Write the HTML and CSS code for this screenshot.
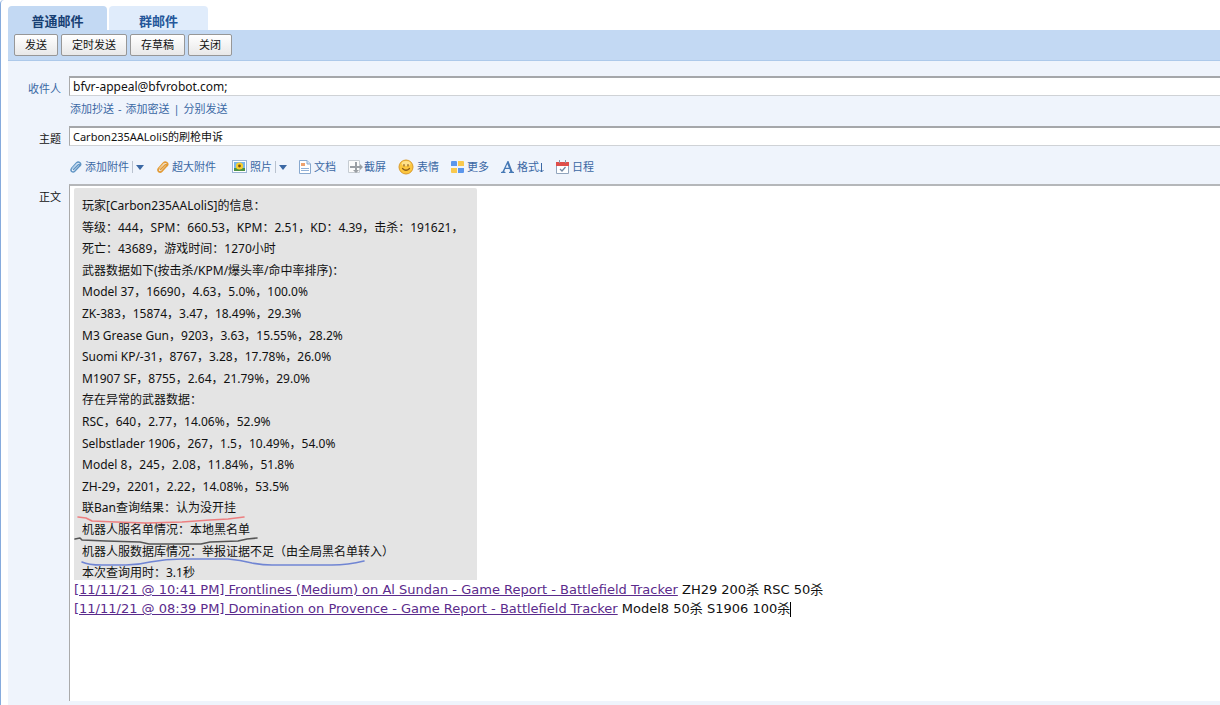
FILE: index.html
```html
<!DOCTYPE html>
<html lang="zh-CN">
<head>
<meta charset="utf-8">
<title>写邮件</title>
<link rel="stylesheet" href="styles.css">
</head>
<body>
<main class="compose">
  <nav class="tabs">
    <a class="tab tab-active" href="#mail">普通邮件</a>
    <a class="tab" href="#group">群邮件</a>
  </nav>
  <div class="actions">
    <button class="btn" type="button">发送</button>
    <button class="btn" type="button">定时发送</button>
    <button class="btn" type="button">存草稿</button>
    <button class="btn" type="button">关闭</button>
  </div>
  <form class="form">
    <label class="label label-link" for="to">收件人</label>
    <input class="field field-to" id="to" type="text" value="bfvr-appeal@bfvrobot.com;">
    <div class="row cc">
      <a href="#cc">添加抄送</a><span>-</span><a href="#bcc">添加密送</a><span>|</span><a href="#separate">分别发送</a>
    </div>
    <label class="label" for="subject">主题</label>
    <input class="field" id="subject" type="text" value="Carbon235AALoliS的刷枪申诉">
    <div class="row tools">
      <a class="tool" href="#attach">
        <svg width="13" height="14" viewBox="0 0 13 14" fill="none" stroke="#5f94c4" stroke-linecap="round"><path d="M4.500 9.500 9 5c1-1 2.300.2 1.400 1.300L5.700 11.300c-1.900 1.900-5-.5-3.200-2.700L7.400 3c2.200-2.300 5.500.3 3.700 2.700" stroke-width="1.500"/><path d="M3.500 8 8 3.200" stroke="#a9cbe8"/></svg>
        <span>添加附件</span><i class="bar"></i><i class="caret"></i>
      </a>
      <a class="tool tool-wide" href="#large">
        <svg width="13" height="14" viewBox="0 0 13 14" fill="none" stroke="#e29a35" stroke-linecap="round"><path d="M4.500 9.500 9 5c1-1 2.300.2 1.400 1.300L5.700 11.300c-1.900 1.900-5-.5-3.200-2.700L7.400 3c2.200-2.300 5.500.3 3.700 2.700" stroke-width="1.700"/><path d="M3.500 8 8 3.200" stroke="#f7cf8b"/></svg>
        <span>超大附件</span>
      </a>
      <a class="tool" href="#photo">
        <svg width="15" height="14" viewBox="0 0 15 14"><rect x=".5" y=".5" width="14" height="12" fill="#fff" stroke="#9ab4d4"/><path d="M2 2h11v9H2z" fill="#79b6ea"/><path d="M2 8h11v3H2z" fill="#4d9247"/><circle cx="7.500" cy="6" r="3.600" fill="#f8cf2c"/><circle cx="7.500" cy="6" r="1.400" fill="#76501d"/></svg>
        <span>照片</span><i class="bar"></i><i class="caret"></i>
      </a>
      <a class="tool" href="#doc">
        <svg width="12" height="14" viewBox="0 0 12 14"><path d="M.5.500h7.500l3.500 3.500v9.500H.5z" fill="#fff" stroke="#89a9cf"/><path d="M8 .5V4h3.500" fill="#d8e6f6" stroke="#89a9cf"/><path d="M2 3h4v3H2z" fill="#efa26e"/><path d="M2 8.500h8M2 10.500h8" stroke="#91b1d8"/></svg>
        <span>文档</span>
      </a>
      <a class="tool tool-shot" href="#shot">
        <svg width="15" height="14" viewBox="0 0 15 14"><path d="M.5.500h11v12H.5z" fill="#fbfbfb" stroke="#c6ccd2"/><path d="M7 2h2v4h5v2H9v4H7V8H2V6h5z" fill="#9a9fa4"/><path d="m12 4 3 3-3 3zM5 10h6l-3 3z" fill="#9a9fa4"/></svg>
        <span>截屏</span>
      </a>
      <a class="tool" href="#face">
        <svg width="16" height="16" viewBox="0 0 16 16"><circle cx="8" cy="8" r="7" fill="#fcc63e" stroke="#d99a2b"/><ellipse cx="8" cy="4.500" rx="4.500" ry="2.500" fill="#ffe18a"/><path d="M6 5.500v1.500M10 5.500v1.500M4.500 9.500q3.500 3.500 7 0" fill="none" stroke="#8a5a18" stroke-width="1.200" stroke-linecap="round"/></svg>
        <span>表情</span>
      </a>
      <a class="tool" href="#more">
        <svg width="13" height="12" viewBox="0 0 13 12"><path d="M1 0h4q1 0 1 1v4H0V1q0-1 1-1zM7 7h6v4q0 1-1 1H7z" fill="#5b96ec"/><path d="M7 0h5q1 0 1 1v4H7zM0 7h6v5H1q-1 0-1-1z" fill="#f9c94e"/></svg>
        <span>更多</span>
      </a>
      <a class="tool" href="#format">
        <svg width="13" height="12" viewBox="0 0 13 12"><path d="M6.500 0h1l4 10.500 1.500.5v1H8v-1l1.300-.5-.8-2.500H4.200l-1 2.500 1.300.5v1H0v-1l1.500-.5zM6.300 3 4.700 6.800h3.200z" fill="#4679b5" fill-rule="evenodd"/></svg>
        <span>格式<svg class="down" width="5" height="10" viewBox="0 0 5 10" role="img" aria-label="展开"><path d="M2.500 0v9M.5 7l2 2 2-2" fill="none" stroke="#3b68a4"/></svg></span>
      </a>
      <a class="tool" href="#calendar">
        <svg width="13" height="14" viewBox="0 0 13 14"><path d="M.5 2.500h12v11H.5z" fill="#fff" stroke="#92a5bd"/><path d="M0 2h13v4H0z" fill="#df4e4a"/><path d="M3.500 0v3M9.500 0v3" stroke="#8996a6"/><path d="m4 9 2 2 3.500-4" fill="none" stroke="#7187a3" stroke-width="1.300"/></svg>
        <span>日程</span>
      </a>
    </div>
    <span class="label" id="body-label">正文</span>
    <div class="editor" role="textbox" aria-labelledby="body-label" contenteditable="true" spellcheck="false">
      <div class="report">
        <p>玩家[Carbon235AALoliS]的信息：</p>
        <p>等级：444，SPM：660.53，KPM：2.51，KD：4.39，击杀：191621，</p>
        <p>死亡：43689，游戏时间：1270小时</p>
        <p>武器数据如下(按击杀/KPM/爆头率/命中率排序)：</p>
        <p>Model 37，16690，4.63，5.0%，100.0%</p>
        <p>ZK-383，15874，3.47，18.49%，29.3%</p>
        <p>M3 Grease Gun，9203，3.63，15.55%，28.2%</p>
        <p>Suomi KP/-31，8767，3.28，17.78%，26.0%</p>
        <p>M1907 SF，8755，2.64，21.79%，29.0%</p>
        <p>存在异常的武器数据：</p>
        <p>RSC，640，2.77，14.06%，52.9%</p>
        <p>Selbstlader 1906，267，1.5，10.49%，54.0%</p>
        <p>Model 8，245，2.08，11.84%，51.8%</p>
        <p>ZH-29，2201，2.22，14.08%，53.5%</p>
        <p>联Ban查询结果：认为没开挂</p>
        <p>机器人服名单情况：本地黑名单</p>
        <p>机器人服数据库情况：举报证据不足（由全局黑名单转入）</p>
        <p class="report-end">本次查询用时：3.1秒</p>
        <svg class="marks" width="300" height="56" viewBox="0 0 300 56" fill="none" stroke-width="1.600" stroke-linecap="round" stroke-linejoin="round">
          <path d="M4 5l8 1 6 3 24 1 30 1 36-1 28-2 18-1 16-2" stroke="#ed7f80"/>
          <path d="M1 27l5-1 2 2 24 1 34 1 9 2h52l9-2 28-1 9-2 10-1" stroke="#555"/>
          <path d="M8 50q6 3 20 3h24q12 0 24-3 16-3 32-3h46q12 1 24 4 10 2 20 2h60q16 0 32-4" stroke="#7085d3"/>
        </svg>
      </div>
      <p class="line"><a href="#r1">[11/11/21 @ 10:41 PM] Frontlines (Medium) on Al Sundan - Game Report - Battlefield Tracker</a> ZH29 200杀 RSC 50杀</p>
      <p class="line"><a href="#r2">[11/11/21 @ 08:39 PM] Domination on Provence - Game Report - Battlefield Tracker</a> Model8 50杀 S1906 100杀<i class="cursor"></i></p>
    </div>
  </form>
</main>
</body>
</html>
```
FILE: styles.css
```css
* { box-sizing: border-box; }
body {
  margin: 0;
  background: #fff;
  color: #111;
  font: 11px/16px "Noto Sans", "Noto Sans CJK SC", sans-serif;
}
p { margin: 0; }
a { color: #3b68a4; text-decoration: none; }
.compose {
  display: flex;
  flex-direction: column;
  min-height: 100vh;
  padding: 6px 0 0 7px;
  border-left: 1px solid #86abdd;
  border-top-left-radius: 4px;
}
.tabs { display: flex; gap: 2px; }
.tab {
  width: 99px;
  height: 24px;
  padding-top: 7px;
  border-radius: 4px 4px 0 0;
  background: #e0ecfb;
  color: #25579a;
  font-size: 13px;
  font-weight: bold;
  text-align: center;
}
.tab-active { background: #c3d9f3; color: #173f73; }
.actions {
  display: flex;
  gap: 3px;
  height: 31px;
  padding: 4px 6px;
  background: #c3d9f3;
  border-bottom: 1px solid #adc9ea;
}
.btn {
  height: 22px;
  padding: 0 10px;
  border: 1px solid #979797;
  border-radius: 2px;
  background: linear-gradient(#fff, #e8e8e8);
  color: #111;
  font: inherit;
}
.form {
  flex: 1;
  display: grid;
  grid-template-columns: 53px minmax(0, 1fr);
  grid-template-rows: 20px 30px 20px 38px 1fr;
  column-gap: 8px;
  padding: 15px 0 4px;
  background: #eff4fc;
}
.label { padding-top: 5px; text-align: right; }
.label-link { color: #3b68a4; }
.field {
  width: 100%;
  padding: 0 3px;
  border: 1px solid #cfd2d6;
  border-top: 2px solid #a5a7aa;
  border-left-color: #aaa;
  border-right: 0;
  background: #fff;
  color: #111;
  font: inherit;
}
.field-to { font-size: 12px; }
.row { grid-column: 2; display: flex; align-items: center; color: #3b68a4; }
.cc { gap: 4px; padding: 0 1px 5px; }
.tools { padding-top: 4px; }
.tool { display: flex; align-items: center; gap: 3px; margin-right: 12px; white-space: nowrap; }
.tool svg { flex: none; }
.tool-wide { margin-right: 16px; }
.tool-shot { gap: 1px; }
.bar { width: 1px; height: 12px; background: #b9c2cf; }
.caret { border: 4px solid transparent; border-top: 5px solid #3b68a4; border-bottom: 0; }
.down { vertical-align: middle; }
.editor {
  padding: 2px 4px;
  border-top: 2px solid #b5b7ba;
  border-left: 1px solid #aaa;
  background: #fff;
  outline: 0;
}
.report {
  position: relative;
  width: 403px;
  max-width: 100%;
  padding: 7px 8px 0;
  border-radius: 2px 2px 0 0;
  background: #e4e4e4;
  font-size: 12px;
  line-height: 1.8;
  white-space: nowrap;
}
.report-end { padding-top: 4px; line-height: 14px; }
.marks { position: absolute; left: 0; bottom: 12px; }
.line { color: #111; font: 13px/19px "DejaVu Sans", "Noto Sans CJK SC", sans-serif; }
.line a { color: #5b2b8c; text-decoration: underline; }
.cursor { display: inline-block; width: 1px; height: 15px; background: #000; vertical-align: middle; }
```
